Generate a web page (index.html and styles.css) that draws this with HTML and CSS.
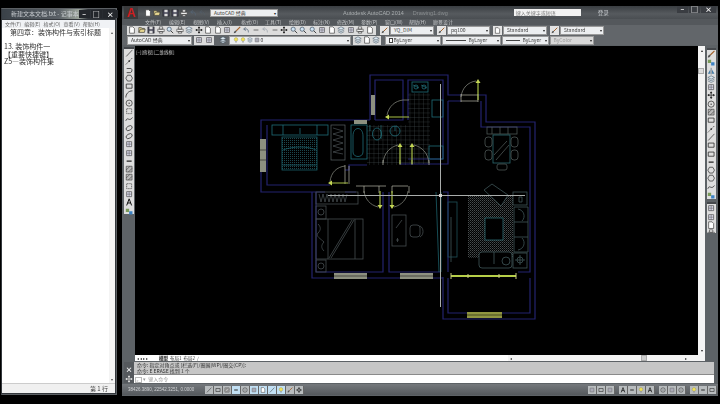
FILE: index.html
```html
<!DOCTYPE html>
<html lang="zh-CN">
<head>
    <meta charset="UTF-8">
    <title>AutoCAD 2014</title>
    <link rel="stylesheet" href="styles.css">
</head>
<body>

<svg class="defs" width="0" height="0">
    <defs>
        <symbol id="i-doc" viewBox="0 0 10 10"><path d="M2 1h4l2 2v6H2z" fill="#fff" stroke="#333" stroke-width=".8"/></symbol>
        <symbol id="i-open" viewBox="0 0 10 10"><path d="M1 8V2h3l1 1h3v1M1 8l2-4h6L8 8z" fill="#e8d890" stroke="#333" stroke-width=".8"/></symbol>
        <symbol id="i-save" viewBox="0 0 10 10"><path d="M1 1h8v8H1z" fill="#445" stroke="#222" stroke-width=".6"/><path d="M3 1h4v3H3zM3 6h4v3H3z" fill="#ddd"/></symbol>
        <symbol id="i-print" viewBox="0 0 10 10"><path d="M3 1h4v3H3zM1 4h8v3H1zM3 7h4v2H3z" fill="#eee" stroke="#333" stroke-width=".7"/></symbol>
        <symbol id="i-zoom" viewBox="0 0 10 10"><circle cx="4" cy="4" r="2.6" fill="#cfe3f2" stroke="#345" stroke-width=".8"/><path d="M6 6l3 3" stroke="#333" stroke-width="1.1"/></symbol>
        <symbol id="i-undo" viewBox="0 0 10 10"><path d="M8 8C8 4 6 3 3 4M4.500 1.500 2 4l3 1.500" fill="none" stroke="#567" stroke-width="1"/></symbol>
        <symbol id="i-layer" viewBox="0 0 10 10"><path d="M5 1l4 2-4 2-4-2zM1 5l4 2 4-2M1 7l4 2 4-2" fill="#dce8f0" stroke="#345" stroke-width=".6"/></symbol>
        <symbol id="i-bulb" viewBox="0 0 10 10"><circle cx="5" cy="4" r="3" fill="#f2e25a" stroke="#775" stroke-width=".5"/><path d="M4 7h2v2H4z" fill="#888"/></symbol>
        <symbol id="i-line" viewBox="0 0 10 10"><path d="M1.500 9 9 1" stroke="#222" stroke-width=".8"/></symbol>
        <symbol id="i-xline" viewBox="0 0 10 10"><path d="M1 9 9 1" stroke="#222" stroke-width=".8" stroke-dasharray="2 1"/><circle cx="5" cy="5" r="1" fill="#222"/></symbol>
        <symbol id="i-pline" viewBox="0 0 10 10"><path d="M2 3h5c2 0 2 5-1 5H2" fill="none" stroke="#222" stroke-width=".9"/></symbol>
        <symbol id="i-poly" viewBox="0 0 10 10"><path d="M3 1.500h4L9 5 7 8.500H3L1 5z" fill="none" stroke="#222" stroke-width=".8"/></symbol>
        <symbol id="i-rect" viewBox="0 0 10 10"><path d="M1.500 2.500h7v5h-7z" fill="none" stroke="#222" stroke-width=".9"/></symbol>
        <symbol id="i-arc" viewBox="0 0 10 10"><path d="M1 9C1 5 4 1 9 1" fill="none" stroke="#222" stroke-width=".9"/></symbol>
        <symbol id="i-circle" viewBox="0 0 10 10"><circle cx="5" cy="5" r="3.700" fill="none" stroke="#222" stroke-width=".8"/><circle cx="5" cy="5" r=".8" fill="#222"/></symbol>
        <symbol id="i-cloud" viewBox="0 0 10 10"><path d="M2 2h6v6H2z" fill="none" stroke="#555" stroke-width="1" stroke-dasharray="1.500 .7"/></symbol>
        <symbol id="i-spline" viewBox="0 0 10 10"><path d="M1 7C3 1 5 9 9 3" fill="none" stroke="#222" stroke-width=".9"/></symbol>
        <symbol id="i-ellipse" viewBox="0 0 10 10"><ellipse cx="5" cy="5" rx="4" ry="2.500" fill="none" stroke="#222" stroke-width=".8" transform="rotate(-30 5 5)"/></symbol>
        <symbol id="i-block" viewBox="0 0 10 10"><path d="M2 2h6v6H2z" fill="#dde" stroke="#444" stroke-width=".8"/><path d="M2 5h6M5 2v6" stroke="#444" stroke-width=".6"/></symbol>
        <symbol id="i-hatch" viewBox="0 0 10 10"><path d="M1.500 1.500h7v7h-7z" fill="#bbb" stroke="#333" stroke-width=".7"/><path d="M1.500 6 6 1.500M4 8.500 8.500 4" stroke="#333" stroke-width=".7"/></symbol>
        <symbol id="i-text" viewBox="0 0 10 10"><path d="M2 9 5 1l3 8M3 6h4" fill="none" stroke="#111" stroke-width="1.200"/></symbol>
        <symbol id="i-add" viewBox="0 0 10 10"><path d="M1 2h4v4H1z" fill="#7a9a5a"/><path d="M5 5h4v4H5z" fill="#3b82c4"/></symbol>
        <symbol id="i-brush" viewBox="0 0 10 10"><path d="M9 1 4 6" stroke="#a4622c" stroke-width="1.400"/><path d="M1 9c0-2 1-3 2.500-3.500L4.500 6.500C4 8 3 9 1 9z" fill="#555"/></symbol>
        <symbol id="i-move" viewBox="0 0 10 10"><path d="M5 1v8M1 5h8M5 1 4 2.500h2zM5 9 4 7.500h2zM1 5l1.500-1v2zM9 5 7.500 4v2z" stroke="#222" stroke-width=".8"/></symbol>
        <symbol id="i-mirror" viewBox="0 0 10 10"><path d="M5 1v8" stroke="#345" stroke-width=".7"/><path d="M4 3v5H1zM6 3v5h3z" fill="#4a7fa8"/></symbol>
        <symbol id="i-dot" viewBox="0 0 10 10"><path d="M2 5h6" stroke="#222" stroke-width="1.600"/></symbol>
    </defs>
</svg>

<!-- notepad window -->
<div class="notepad">
    <div class="np-title">
        <span class="np-caption">新建文本文档.txt - 记事本</span>
        <div class="np-btns"><b>–</b><b>□</b><b class="np-close">×</b></div>
    </div>
    <div class="np-menu">
        <span>文件(F)</span><span>编辑(E)</span><span>格式(O)</span><span>查看(V)</span><span>帮助(H)</span>
    </div>
    <div class="np-body">
        <div class="np-text">
            <p class="np-head">第四章：装饰构件与索引标题</p>
            <p>13. 装饰构件一</p>
            <p>【重要快捷键】</p>
            <p>Z5—装饰构件集</p>
        </div>
        <div class="np-scroll"><i>▴</i><i>▾</i></div>
    </div>
    <div class="np-status">第 1 行</div>
</div>

<!-- autocad window -->
<div class="cad">
    <div class="cad-title">
        <div class="logo">A</div>
        <div class="quick">
            <svg class="ic"><use href="#i-doc"/></svg>
            <svg class="ic"><use href="#i-open"/></svg>
            <svg class="ic"><use href="#i-save"/></svg>
            <svg class="ic"><use href="#i-save"/></svg>
            <svg class="ic"><use href="#i-print"/></svg>
            <svg class="ic"><use href="#i-undo"/></svg>
            <svg class="ic dim"><use href="#i-undo"/></svg>
        </div>
        <div class="combo workspace">AutoCAD 经典<em>▾</em></div>
        <span class="app-name">Autodesk AutoCAD 2014</span>
        <span class="app-file">Drawing1.dwg</span>
        <div class="search">键入关键字或短语</div>
        <span class="login">登录</span>
        <div class="win-btns"><b>–</b><b>□</b><b>×</b></div>
    </div>

    <div class="cad-menu">
        <span>文件(F)</span><span>编辑(E)</span><span>视图(V)</span><span>插入(I)</span><span>格式(O)</span><span>工具(T)</span><span>绘图(D)</span><span>标注(N)</span><span>修改(M)</span><span>参数(P)</span><span>窗口(W)</span><span>帮助(H)</span><span>廊景设计</span>
    </div>

    <div class="tools">
        <div class="tool-icons first">
            <svg class="ic"><use href="#i-doc"/></svg><svg class="ic"><use href="#i-open"/></svg><svg class="ic"><use href="#i-save"/></svg><svg class="ic"><use href="#i-print"/></svg><svg class="ic"><use href="#i-zoom"/></svg><svg class="ic"><use href="#i-print"/></svg><svg class="ic"><use href="#i-layer"/></svg><svg class="ic"><use href="#i-move"/></svg><svg class="ic"><use href="#i-doc"/></svg><svg class="ic"><use href="#i-doc"/></svg><svg class="ic"><use href="#i-block"/></svg><svg class="ic"><use href="#i-brush"/></svg><svg class="ic"><use href="#i-undo"/></svg><svg class="ic dim"><use href="#i-dot"/></svg><svg class="ic dim"><use href="#i-undo"/></svg><svg class="ic dim"><use href="#i-dot"/></svg><svg class="ic"><use href="#i-move"/></svg><svg class="ic"><use href="#i-zoom"/></svg><svg class="ic"><use href="#i-zoom"/></svg><svg class="ic"><use href="#i-zoom"/></svg><svg class="ic"><use href="#i-block"/></svg><svg class="ic"><use href="#i-doc"/></svg><svg class="ic"><use href="#i-layer"/></svg><svg class="ic"><use href="#i-block"/></svg><svg class="ic"><use href="#i-print"/></svg><svg class="ic"><use href="#i-doc"/></svg>
        </div>
        <svg class="ic sep"><use href="#i-brush"/></svg><div class="combo w44">YQ_DIM<em>▾</em></div>
        <svg class="ic sep"><use href="#i-brush"/></svg><div class="combo w43">pq100<em>▾</em></div>
        <svg class="ic sep"><use href="#i-doc"/></svg><div class="combo w44">Standard<em>▾</em></div>
        <svg class="ic sep"><use href="#i-brush"/></svg><div class="combo w44">Standard<em>▾</em></div>
    </div>

    <div class="tools second">
        <div class="combo w65">AutoCAD 经典<em>▾</em></div>
        <div class="tool-icons gap">
            <svg class="ic"><use href="#i-block"/></svg><svg class="ic"><use href="#i-block"/></svg>
        </div>
        <svg class="ic"><use href="#i-layer"/></svg>
        <div class="combo layer">
            <svg class="ic"><use href="#i-bulb"/></svg><svg class="ic"><use href="#i-bulb"/></svg><svg class="ic"><use href="#i-layer"/></svg><svg class="ic"><use href="#i-block"/></svg>0<em>▾</em>
        </div>
        <div class="tool-icons after-layer">
            <svg class="ic"><use href="#i-layer"/></svg><svg class="ic"><use href="#i-doc"/></svg><svg class="ic"><use href="#i-layer"/></svg>
        </div>
        <div class="combo w56"><i class="swatch"></i>ByLayer<em>▾</em></div>
        <div class="combo w59"><i class="rule"></i>ByLayer<em>▾</em></div>
        <div class="combo w47"><i class="rule short"></i>ByLayer<em>▾</em></div>
        <div class="combo w44 off">ByColor<em>▾</em></div>
    </div>

    <div class="work">
        <div class="toolbox left">
            <svg class="ic"><use href="#i-line"/></svg>
            <svg class="ic"><use href="#i-xline"/></svg>
            <svg class="ic"><use href="#i-pline"/></svg>
            <svg class="ic"><use href="#i-poly"/></svg>
            <svg class="ic"><use href="#i-rect"/></svg>
            <svg class="ic"><use href="#i-arc"/></svg>
            <svg class="ic"><use href="#i-circle"/></svg>
            <svg class="ic"><use href="#i-cloud"/></svg>
            <svg class="ic"><use href="#i-spline"/></svg>
            <svg class="ic"><use href="#i-ellipse"/></svg>
            <svg class="ic"><use href="#i-ellipse"/></svg>
            <svg class="ic"><use href="#i-block"/></svg>
            <svg class="ic"><use href="#i-block"/></svg>
            <svg class="ic"><use href="#i-dot"/></svg>
            <svg class="ic"><use href="#i-hatch"/></svg>
            <svg class="ic"><use href="#i-hatch"/></svg>
            <svg class="ic"><use href="#i-cloud"/></svg>
            <svg class="ic"><use href="#i-block"/></svg>
            <svg class="ic"><use href="#i-text"/></svg>
            <svg class="ic"><use href="#i-add"/></svg>
        </div>

        <div class="canvas-wrap">
            <div class="canvas">
                <span class="view-label">[–][俯视][二维线框]</span>
                <svg class="plan" viewBox="135 46 563 309" width="563" height="309">
                    <defs>
                        <pattern id="tile" width="4.500" height="4.500" patternUnits="userSpaceOnUse">
                            <path d="M4.500 0H0V4.500" fill="none" stroke="#50585c" stroke-width=".5"/>
                        </pattern>
                        <pattern id="dots" width="2" height="2" patternUnits="userSpaceOnUse">
                            <rect width="1" height="1" fill="#484d4e"/>
                            <rect x="1" y="1" width="1" height="1" fill="#2a2e2f"/>
                        </pattern>
                        <pattern id="dots-teal" width="2" height="2" patternUnits="userSpaceOnUse">
                            <rect width="1" height="1" fill="#1c464c"/>
                        </pattern>
                    </defs>

                    <!-- walls -->
                    <g fill="none" stroke="#23236e" stroke-width="1.200">
                        <path d="M370 120V75H448V95H461M478 95H486V122H535V319H443V277"/>
                        <path d="M375 120V80H403V120H375M408 120V80H443V159H408"/>
                        <path d="M448 101V164H400M481 101V127H530V272H518M448 101H461"/>
                        <path d="M370 120H261V192H325M345 192H356"/>
                        <path d="M267 125V185H330M345 170H349V165H367"/>
                        <path d="M312 192V278H443M316 192V272H383V192M389 192V272H441"/>
                        <path d="M448 278V313H467M502 313H530V278M443 192H448V272"/>
                    </g>

                    <!-- windows -->
                    <g fill="#8d9080">
                        <rect x="260" y="139" width="6" height="33"/>
                        <rect x="354" y="120" width="13" height="4"/>
                        <rect x="371" y="95" width="4" height="20"/>
                        <rect x="334" y="273" width="33" height="6"/>
                        <rect x="400" y="273" width="33" height="6"/>
                    </g>
                    <rect x="467" y="312" width="35" height="6" fill="#8f9440"/>
                    <g stroke="#000" stroke-width=".5">
                        <path d="M260 150h6M260 160h6M334 276h33M400 276h33M467 315h35"/>
                    </g>
                    <path d="M451 276H516" stroke="#b6cf48" stroke-width="2.200"/>
                    <path d="M451 273v6M468 274v4M499 274v4M516 273v6" stroke="#c8cc80" stroke-width="1"/>

                    <!-- kitchen and bath -->
                    <rect x="408" y="93" width="22" height="71" fill="url(#tile)"/>
                    <rect x="367" y="125" width="41" height="40" fill="url(#tile)"/>
                    <g fill="none" stroke="#1f6d78" stroke-width=".8">
                        <rect x="412" y="82" width="16" height="10"/>
                        <circle cx="416" cy="87" r="2"/><circle cx="424" cy="87" r="2"/>
                        <rect x="432" y="100" width="11" height="17"/>
                        <rect x="429" y="146" width="14" height="13"/>
                        <rect x="351" y="125" width="16" height="34"/>
                        <path d="M353 136c0-10 10-10 10 0v16c0 6-10 6-10 0z"/>
                        <ellipse cx="377" cy="134" rx="4.500" ry="6"/>
                        <circle cx="395" cy="131" r="5"/>
                        <path d="M395 126v5"/>
                        <rect x="272" y="125" width="56" height="10"/>
                        <path d="M283 125v10M317 125v10M300 128v6"/>
                    </g>
                    <path d="M413 85l6 3M421 85l6 3M381 125v14M370 125v6" stroke="#2b7f88" stroke-width=".6"/>

                    <!-- first bed -->
                    <rect x="282" y="137" width="35" height="33" fill="url(#dots-teal)" stroke="#1f6d78" stroke-width=".7"/>
                    <path d="M283 150c10-4 25-4 33 0M283 165h33" stroke="#1f6d78" fill="none" stroke-width=".7"/>
                    <rect x="331" y="125" width="14" height="35" fill="none" stroke="#596165" stroke-width=".7"/>
                    <path d="M333 128l10 3-10 3 10 3-10 3 10 3-10 3 10 3-10 3 10 2" fill="none" stroke="#596165" stroke-width=".6"/>

                    <!-- doors -->
                    <g fill="none" stroke="#8d8f85" stroke-width=".7">
                        <path d="M330 182C331 172 337 167 345 166"/>
                        <path d="M387 115C389 106 395 101 403 100H409"/>
                        <path d="M383 163C384 153 390 147 398 145"/>
                        <path d="M429 163C428 153 422 147 414 145"/>
                        <path d="M461 97C462 88 468 82 476 81"/>
                        <path d="M364 191C365 199 370 205 378 207"/>
                        <path d="M408 191C407 199 402 205 394 207"/>
                    </g>
                    <g fill="none" stroke="#b4b4a8" stroke-width=".7">
                        <path d="M345 165v19M349 166v18M383 160v5M400 160v5M412 160v5M429 160v5"/>
                        <path d="M461 95h17M461 101h17M461 94v8M478 94v8"/>
                        <path d="M364 186v7M379 186v7M392 186v7M409 186v7M356 186h30M392 186h16"/>
                    </g>
                    <g fill="none" stroke="#a8c046" stroke-width="1.200">
                        <path d="M331 183H348M388 117H409M400 146V164M412 146V164M478 82V100M380 191V206M392 191V206"/>
                    </g>
                    <g fill="#c4d656">
                        <path d="M328 183l4-2.500v5zM385 117l4-2.500v5zM400 143l-2.500 4h5zM412 143l-2.500 4h5zM478 79l-2.500 4h5zM380 209l-2.500-4h5zM392 209l-2.500-4h5z"/>
                    </g>

                    <!-- bedroom, study -->
                    <g fill="none" stroke="#454d4f" stroke-width=".8">
                        <rect x="316" y="192" width="42" height="12"/>
                        <path d="M319 194l2 8 2-8 2 8 2-8 2 8 2-8 2 8 2-8 2 8 2-8 2 8 2-8 2 8 2-8"/>
                        <rect x="316" y="206" width="10" height="13"/>
                        <rect x="316" y="260" width="10" height="12"/>
                        <circle cx="321" cy="212" r="3"/><circle cx="321" cy="266" r="3"/>
                        <rect x="316" y="219" width="47" height="40"/>
                        <path d="M328 219v40M355 219v40M329 258 352 220M331 258 354 220"/>
                        <path d="M318 224c3 3 3 6 0 9s3 6 6 9c-3 3-3 6 0 9"/>
                        <rect x="392" y="215" width="14" height="31"/>
                        <path d="M396 228l6-8"/>
                        <path d="M396 240h3M397.500 238v4"/>
                        <rect x="410" y="225" width="10" height="12" rx="3"/>
                        <path d="M420 226c4 2 4 9 0 11"/>
                    </g>
                    <path d="M436 192 439 272M441 192V272" stroke="#1f6d78" stroke-width=".7" fill="none"/>

                    <!-- living room -->
                    <rect x="468" y="195" width="45" height="63" fill="url(#dots)"/>
                    <rect x="485" y="218" width="18" height="22" fill="#000" stroke="#2b6a70" stroke-width=".8"/>
                    <g fill="none" stroke="#3f5558" stroke-width=".8">
                        <path d="M484 190l8-6 16 11-7 11z" fill="#000"/>
                        <rect x="448" y="202" width="9" height="55" stroke="#1f5058"/>
                        <path d="M451 217v45"/>
                        <rect x="513" y="192" width="14" height="13"/>
                        <path d="M519 197h3v5h-3z"/>
                        <path d="M514 207h14v45h-14z" fill="#000"/>
                        <path d="M514 222h14M514 237h14"/>
                        <path d="M518 209c6 1 8 8 4 12M518 250c6-1 8-8 4-12"/>
                        <rect x="479" y="252" width="33" height="16" rx="3" fill="#000"/>
                        <path d="M494 252v12"/>
                        <circle cx="506" cy="261" r="4"/>
                        <rect x="513" y="253" width="14" height="15"/>
                        <circle cx="520" cy="260" r="3"/>
                        <path d="M520 255v10M515 260h10"/>
                    </g>

                    <!-- dining -->
                    <g fill="none" stroke="#4c5654" stroke-width=".8">
                        <rect x="487" y="127" width="30" height="7"/>
                        <path d="M492 127v7M500 127v7M508 127v7"/>
                        <rect x="493" y="135" width="17" height="28" stroke="#2b6a70"/>
                        <path d="M494 155l13-14M496 160l13-15" />
                        <rect x="485" y="137" width="7" height="10" rx="3"/>
                        <rect x="485" y="150" width="7" height="10" rx="3"/>
                        <rect x="511" y="137" width="7" height="10" rx="3"/>
                        <rect x="511" y="150" width="7" height="10" rx="3"/>
                        <rect x="497" y="164" width="10" height="6" rx="2"/>
                    </g>

                    <!-- crosshair -->
                    <path d="M440.500 84V307M328 195.500H525" stroke="#a9adab" stroke-width="1"/>
                    <rect x="439" y="194" width="3" height="3" fill="#d0d0d0"/>
                </svg>
            </div>
            <div class="tabs">
                <div class="tab-strip">
                    <span class="arrows">◂ ◂ ▸ ▸</span>
                    <span class="tab on">模型</span><span class="tab">布局1</span><span class="tab">布局2</span><span class="tab-end">/</span>
                </div>
                <div class="hscroll"><i>◂</i><b></b><i>▸</i></div>
            </div>
        </div>

        <div class="vscroll"><i>▴</i><b></b><i class="down">▾</i></div>

        <div class="right-col">
            <div class="toolbox right">
                <svg class="ic"><use href="#i-brush"/></svg>
                <svg class="ic"><use href="#i-add"/></svg>
                <svg class="ic"><use href="#i-mirror"/></svg>
                <svg class="ic"><use href="#i-layer"/></svg>
                <svg class="ic"><use href="#i-block"/></svg>
                <svg class="ic"><use href="#i-move"/></svg>
                <svg class="ic"><use href="#i-circle"/></svg>
                <svg class="ic"><use href="#i-hatch"/></svg>
                <svg class="ic"><use href="#i-rect"/></svg>
                <svg class="ic"><use href="#i-xline"/></svg>
                <svg class="ic"><use href="#i-line"/></svg>
                <svg class="ic"><use href="#i-rect"/></svg>
                <svg class="ic"><use href="#i-rect"/></svg>
                <svg class="ic"><use href="#i-dot"/></svg>
                <svg class="ic"><use href="#i-poly"/></svg>
                <svg class="ic"><use href="#i-poly"/></svg>
                <svg class="ic"><use href="#i-spline"/></svg>
                <svg class="ic"><use href="#i-add"/></svg>
            </div>
            <div class="toolbox right short">
                <svg class="ic"><use href="#i-block"/></svg>
                <svg class="ic"><use href="#i-block"/></svg>
                <svg class="ic"><use href="#i-doc"/></svg>
                <svg class="ic"><use href="#i-print"/></svg>
            </div>
        </div>
    </div>

    <div class="command">
        <div class="cmd-side">
            <span>×</span>
            <svg class="ic"><use href="#i-move"/></svg>
        </div>
        <div class="cmd-main">
            <div class="cmd-log">
                <p>命令: 指定对角点或 [栏选(F)/圈围(WP)/圈交(CP)]:</p>
                <p>命令: E ERASE 找到 1 个</p>
            </div>
            <div class="cmd-input"><span class="cmd-box">&gt;_</span> ▾ &nbsp;键入命令</div>
        </div>
    </div>

    <div class="status">
        <span class="coords">38426.3890, 22542.3251, 0.0000</span>
        <div class="st-icons">
            <svg class="ic"><use href="#i-line"/></svg><svg class="ic"><use href="#i-rect"/></svg><svg class="ic"><use href="#i-hatch"/></svg><svg class="ic on"><use href="#i-dot"/></svg><svg class="ic"><use href="#i-circle"/></svg><svg class="ic on"><use href="#i-block"/></svg><svg class="ic on"><use href="#i-doc"/></svg><svg class="ic on"><use href="#i-line"/></svg><svg class="ic on"><use href="#i-bulb"/></svg><svg class="ic"><use href="#i-brush"/></svg><svg class="ic"><use href="#i-move"/></svg>
        </div>
        <div class="st-right">
            <svg class="ic"><use href="#i-block"/></svg><svg class="ic"><use href="#i-rect"/></svg><svg class="ic"><use href="#i-block"/></svg>
            <i class="st-gap"></i>
            <svg class="ic"><use href="#i-text"/></svg><svg class="ic"><use href="#i-dot"/></svg><svg class="ic"><use href="#i-bulb"/></svg><svg class="ic"><use href="#i-text"/></svg>
            <i class="st-gap"></i>
            <svg class="ic"><use href="#i-circle"/></svg><svg class="ic"><use href="#i-block"/></svg><svg class="ic"><use href="#i-circle"/></svg>
            <i class="st-gap"></i>
            <svg class="ic"><use href="#i-bulb"/></svg><svg class="ic"><use href="#i-dot"/></svg><svg class="ic"><use href="#i-rect"/></svg>
        </div>
    </div>
</div>

</body>
</html>
```

FILE: styles.css
```css
* {
    box-sizing: border-box;
}

html, body {
    margin: 0;
    height: 100%;
}

body {
    position: relative;
    width: 720px;
    height: 404px;
    overflow: hidden;
    background-color: #000;
    font-family: "Noto Sans CJK SC", "Liberation Sans", sans-serif;
    font-size: 6px;
    color: #222;
}

.defs {
    position: absolute;
}

.ic {
    width: 8px;
    height: 8px;
    flex: none;
    display: block;
}

.ic.dim {
    opacity: .45;
}

/* notepad */
.notepad {
    position: absolute;
    left: 1px;
    top: 8px;
    width: 116px;
    height: 387px;
    display: flex;
    flex-direction: column;
    background-color: #33373c;
    border: 1px solid #5c6064;
    border-left-color: #33373c;
    padding: 0 1px 1px 0;
    filter: blur(.35px);
}

.np-title {
    height: 10px;
    display: flex;
    align-items: center;
    justify-content: space-between;
    background: linear-gradient(90deg, #3a4148 0, #5a6066 50%, #9aa39a 68%, #30343a 76%, #22252a 100%);
}

.np-caption {
    font-size: 6px;
    line-height: 10px;
    color: #c8ccd0;
    padding-left: 9px;
    white-space: nowrap;
}

.np-btns {
    display: flex;
    gap: 1px;
    margin-right: 1px;
}

.np-btns b {
    width: 11px;
    height: 8px;
    font-size: 7px;
    line-height: 8px;
    text-align: center;
    color: #fff;
    font-weight: 700;
    background-color: #24272c;
}

.np-btns .np-close {
    width: 15px;
}

.np-menu {
    height: 8px;
    margin-top: 1px;
    display: flex;
    gap: 3px;
    padding-left: 3px;
    font-size: 5px;
    line-height: 8px;
    color: #666;
    background-color: #f0f2f5;
    white-space: nowrap;
}

.np-body {
    flex: 1;
    display: flex;
    background-color: #fff;
    min-height: 0;
}

.np-text {
    flex: 1;
    padding: 1px 0 0 2px;
    font-size: 7px;
    color: #333;
}

.np-text p {
    margin: 0;
    height: 7.500px;
    line-height: 7.500px;
    white-space: nowrap;
}

.np-text .np-head {
    padding-left: 6px;
    margin-bottom: 6.500px;
}

.np-scroll {
    width: 6px;
    display: flex;
    flex-direction: column;
    justify-content: space-between;
    background-color: #f4f4f4;
    color: #555;
    font-size: 4px;
    text-align: center;
}

.np-scroll i {
    font-style: normal;
    line-height: 8px;
}

.np-status {
    height: 10px;
    padding-right: 7px;
    border-top: 1px solid #ccc;
    background-color: #f0f0f0;
    color: #444;
    font-size: 6px;
    line-height: 9px;
    text-align: right;
}

/* autocad window */
.cad {
    position: absolute;
    left: 122px;
    top: 6px;
    width: 596px;
    height: 390px;
    display: flex;
    flex-direction: column;
    background-color: #5d6266;
    filter: blur(.35px);
}

.cad-title {
    height: 13px;
    display: flex;
    align-items: center;
    background: linear-gradient(#3a3e42, #565a5e 60%, #4a4e52);
    white-space: nowrap;
}

.logo {
    width: 14px;
    height: 13px;
    margin-left: 2px;
    font-family: "Liberation Sans", sans-serif;
    font-size: 12px;
    font-weight: 700;
    line-height: 15px;
    color: #d01c1c;
    text-align: center;
    background-color: #3a3a3c;
}

.quick {
    display: flex;
    gap: 1px;
    width: 65px;
    margin-left: 4px;
    padding-left: 2px;
}

.combo {
    position: relative;
    height: 8px;
    flex: none;
    display: flex;
    align-items: center;
    gap: 1px;
    padding-left: 3px;
    border: 1px solid #999;
    background-color: #eceef0;
    font-size: 5px;
    line-height: 6px;
    color: #444;
    white-space: nowrap;
}

.combo em {
    position: absolute;
    right: 1px;
    top: 0;
    font-style: normal;
    font-size: 4px;
    line-height: 6px;
    color: #222;
}

.combo .ic {
    width: 6px;
    height: 6px;
}

.workspace {
    width: 68px;
    margin-left: 3px;
}

.app-name {
    margin-left: 65px;
    color: #a8acae;
    font-size: 5.500px;
    font-family: "Liberation Sans", sans-serif;
}

.app-file {
    margin-left: 9px;
    color: #8a8e90;
    font-size: 5.500px;
    font-family: "Liberation Sans", sans-serif;
}

.search {
    width: 67px;
    height: 7px;
    margin-left: 66px;
    padding-left: 2px;
    background-color: #f2f2f2;
    color: #777;
    font-size: 5px;
    line-height: 7px;
}

.login {
    margin-left: 17px;
    color: #c8ccd0;
    font-size: 5.500px;
}

.win-btns {
    display: flex;
    gap: 1px;
    margin-left: auto;
    margin-right: 2px;
    align-self: flex-start;
}

.win-btns b {
    width: 11px;
    height: 7px;
    font-size: 7px;
    line-height: 7px;
    color: #fff;
    text-align: center;
    background-color: #3a3d42;
}

.win-btns b:last-child {
    width: 15px;
}

.cad-menu {
    height: 6px;
    display: flex;
    gap: 7px;
    padding-left: 23px;
    font-size: 5px;
    line-height: 6px;
    color: #c4c6c8;
    background-color: #54585c;
    white-space: nowrap;
}

.cad-menu span {
    width: 17px;
}

.tools {
    height: 10px;
    display: flex;
    align-items: center;
    gap: 1px;
    padding-left: 5px;
    background-color: #62666a;
}

.tools .combo {
    height: 9px;
}

.tool-icons {
    display: flex;
    gap: 1.500px;
    height: 9px;
    align-items: center;
    background-color: #dcdcdc;
}

.tool-icons.first {
    width: 249px;
    padding-left: 1px;
    margin-right: 1px;
}

.tool-icons.gap {
    margin: 0 4px 0 1px;
    padding: 0 1px;
}

.tools > .ic.sep {
    width: 9px;
    height: 9px;
    padding: 1px;
    margin-left: 2px;
    background-color: #e4e4e4;
}

.w43 { width: 43px; }
.w44 { width: 44px; }
.w47 { width: 47px; }
.w56 { width: 56px; }
.w59 { width: 59px; }
.w65 { width: 65px; }

.layer {
    width: 122px;
    margin-left: 1px;
}

.after-layer {
    margin: 0 3px 0 1px;
    padding: 0 1px;
    gap: 1px;
}

.off {
    color: #999;
    background-color: #d8d8d8;
}

.swatch {
    width: 4px;
    height: 5px;
    background-color: #fff;
    border: 1px solid #444;
}

.rule {
    width: 20px;
    height: 1px;
    background-color: #444;
    margin-right: 2px;
}

.rule.short {
    width: 14px;
}

.work {
    height: 315px;
    margin-top: 1px;
    display: flex;
}

.toolbox {
    width: 10px;
    display: flex;
    flex-direction: column;
    align-items: center;
    background-color: #dedede;
    border-top: 2px solid #45484c;
}

.toolbox .ic {
    width: 8.300px;
    height: 8.300px;
}

.toolbox.left {
    height: 167px;
    margin: 1px 1px 0 2px;
}

.canvas-wrap {
    width: 563px;
    flex: none;
    display: flex;
    flex-direction: column;
}

.canvas {
    position: relative;
    height: 309px;
    background-color: #000;
    overflow: hidden;
}

.view-label {
    position: absolute;
    left: 1px;
    top: 3px;
    color: #c8c8c8;
    font-size: 4.500px;
    line-height: 6px;
    white-space: nowrap;
}

.plan {
    display: block;
}

.tabs {
    height: 6px;
    display: flex;
    background-color: #f4f4f4;
}

.tab-strip {
    width: 373px;
    display: flex;
    gap: 2px;
    padding-left: 2px;
    font-size: 4.500px;
    line-height: 6px;
    white-space: nowrap;
    color: #333;
    background-color: #fff;
}

.arrows {
    width: 20px;
    font-size: 4px;
}

.tab-end {
    color: #555;
}

.tab.on {
    font-weight: 700;
    background-color: #ddd;
}

.hscroll {
    flex: 1;
    position: relative;
    display: flex;
    justify-content: space-between;
    font-size: 4px;
    line-height: 6px;
    padding: 0 11px 0 2px;
    color: #333;
}

.hscroll i {
    font-style: normal;
}

.hscroll b {
    position: absolute;
    left: 133px;
    top: 0;
    width: 6px;
    height: 6px;
    background-color: #ccc;
    border: 1px solid #aaa;
}

.vscroll {
    width: 7px;
    height: 315px;
    flex: none;
    position: relative;
    background-color: #f4f4f4;
    color: #222;
    font-size: 4px;
    text-align: center;
}

.vscroll i {
    position: absolute;
    left: 0;
    width: 100%;
    top: 1px;
    font-style: normal;
    line-height: 6px;
}

.vscroll i.down {
    top: auto;
    bottom: 8px;
}

.vscroll b {
    position: absolute;
    left: 0;
    top: 22px;
    width: 6px;
    height: 6px;
    background-color: #ddd;
    border: 1px solid #aaa;
}

.right-col {
    width: 12px;
    padding: 2px 1px 0 2px;
    display: flex;
    flex-direction: column;
    gap: 3px;
}

.right-col .toolbox {
    width: 9px;
}

.right-col .short {
    height: 31px;
    overflow: hidden;
}

.command {
    height: 21px;
    margin: 1px 4px 0 2px;
    display: flex;
}

.cmd-side {
    width: 10px;
    display: flex;
    flex-direction: column;
    justify-content: flex-end;
    align-items: center;
    gap: 1px;
    color: #fff;
    background-color: #55595d;
    font-size: 7px;
    line-height: 9px;
    font-weight: 700;
}

.cmd-side .ic {
    filter: invert(1);
}

.cmd-main {
    flex: 1;
    display: flex;
    flex-direction: column;
}

.cmd-log {
    height: 13px;
    padding: 0 0 0 3px;
    background-color: #c6c6c6;
    border-bottom: 1px solid #8a8a8a;
}

.cmd-log p {
    margin: 0;
    font-size: 5px;
    line-height: 6px;
    color: #333;
    white-space: nowrap;
}

.cmd-input {
    height: 8px;
    padding-left: 1px;
    background-color: #fff;
    font-size: 5px;
    line-height: 8px;
    color: #999;
}

.cmd-box {
    display: inline-block;
    width: 7px;
    height: 6px;
    line-height: 5px;
    font-size: 3.500px;
    text-align: center;
    vertical-align: middle;
    border: 1px solid #bbb;
    color: #555;
}

.status {
    height: 11px;
    margin-top: 1px;
    display: flex;
    align-items: center;
    padding: 0 0 0 6px;
    background: linear-gradient(#74787c, #55595d);
}

.coords {
    width: 77px;
    font-size: 4.500px;
    line-height: 8px;
    color: #d0d2d4;
    font-family: "Liberation Sans", sans-serif;
    white-space: nowrap;
}

.st-icons {
    display: flex;
    gap: 0;
}

.st-icons .ic,
.st-right .ic {
    width: 9px;
    height: 8px;
    padding: 1px;
    background-color: #b8bcbe;
    border-right: 1px solid #666;
}

.st-icons .ic.on {
    background-color: #c2e0f4;
}

.st-right {
    display: flex;
    margin-left: auto;
    margin-right: 1px;
}

.st-gap {
    width: 4px;
}
```
